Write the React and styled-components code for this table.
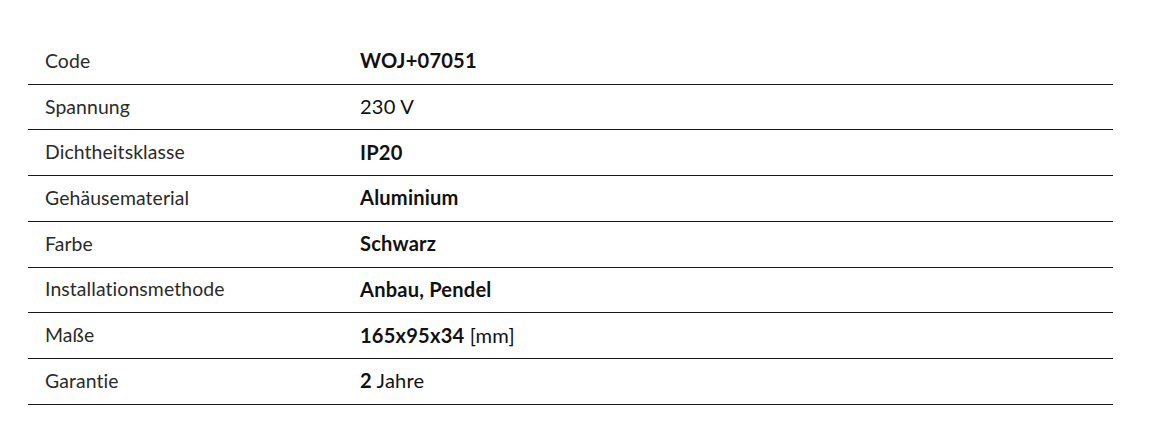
import React from "react";
import styled, { createGlobalStyle } from "styled-components";

const Global = createGlobalStyle`
  html, body { margin: 0; padding: 0; background: #fff; }
  body { font-family: Lato, "Liberation Sans", sans-serif; }
`;

const Wrap = styled.div`
  padding: 39px 38px 0 28px;
`;

const Table = styled.div`
  width: 1085px;
  display: flex;
  flex-direction: column;
`;

const Row = styled.div`
  box-sizing: border-box;
  height: 45.714px;
  display: grid;
  grid-template-columns: 332px 1fr;
  align-items: center;
  border-bottom: 1px solid #1a1a1a;
`;

const Label = styled.div`
  padding-left: 17px;
  padding-bottom: 2px;
  font-family: Lato, sans-serif;
  font-size: 19.4px;
  letter-spacing: 0.1px;
  color: #2a2a2a;
`;

const Value = styled.div`
  padding-bottom: 2px;
  font-family: Lato, sans-serif;
  font-size: 20.1px;
  letter-spacing: 0.2px;
  color: #111;
`;

const B = styled.b`
  font-weight: 700;
`;

const rows = [
  ["Code", <B>WOJ+07051</B>],
  ["Spannung", "230 V"],
  ["Dichtheitsklasse", <B>IP20</B>],
  ["Gehäusematerial", <B>Aluminium</B>],
  ["Farbe", <B>Schwarz</B>],
  ["Installationsmethode", <B>Anbau, Pendel</B>],
  ["Maße", <><B>165x95x34</B> [mm]</>],
  ["Garantie", <><B>2</B> Jahre</>],
];

export default function App() {
  return (
    <>
      <Global />
      <Wrap>
        <Table>
          {rows.map(([l, v], i) => (
            <Row key={i}>
              <Label>{l}</Label>
              <Value>{v}</Value>
            </Row>
          ))}
        </Table>
      </Wrap>
    </>
  );
}
